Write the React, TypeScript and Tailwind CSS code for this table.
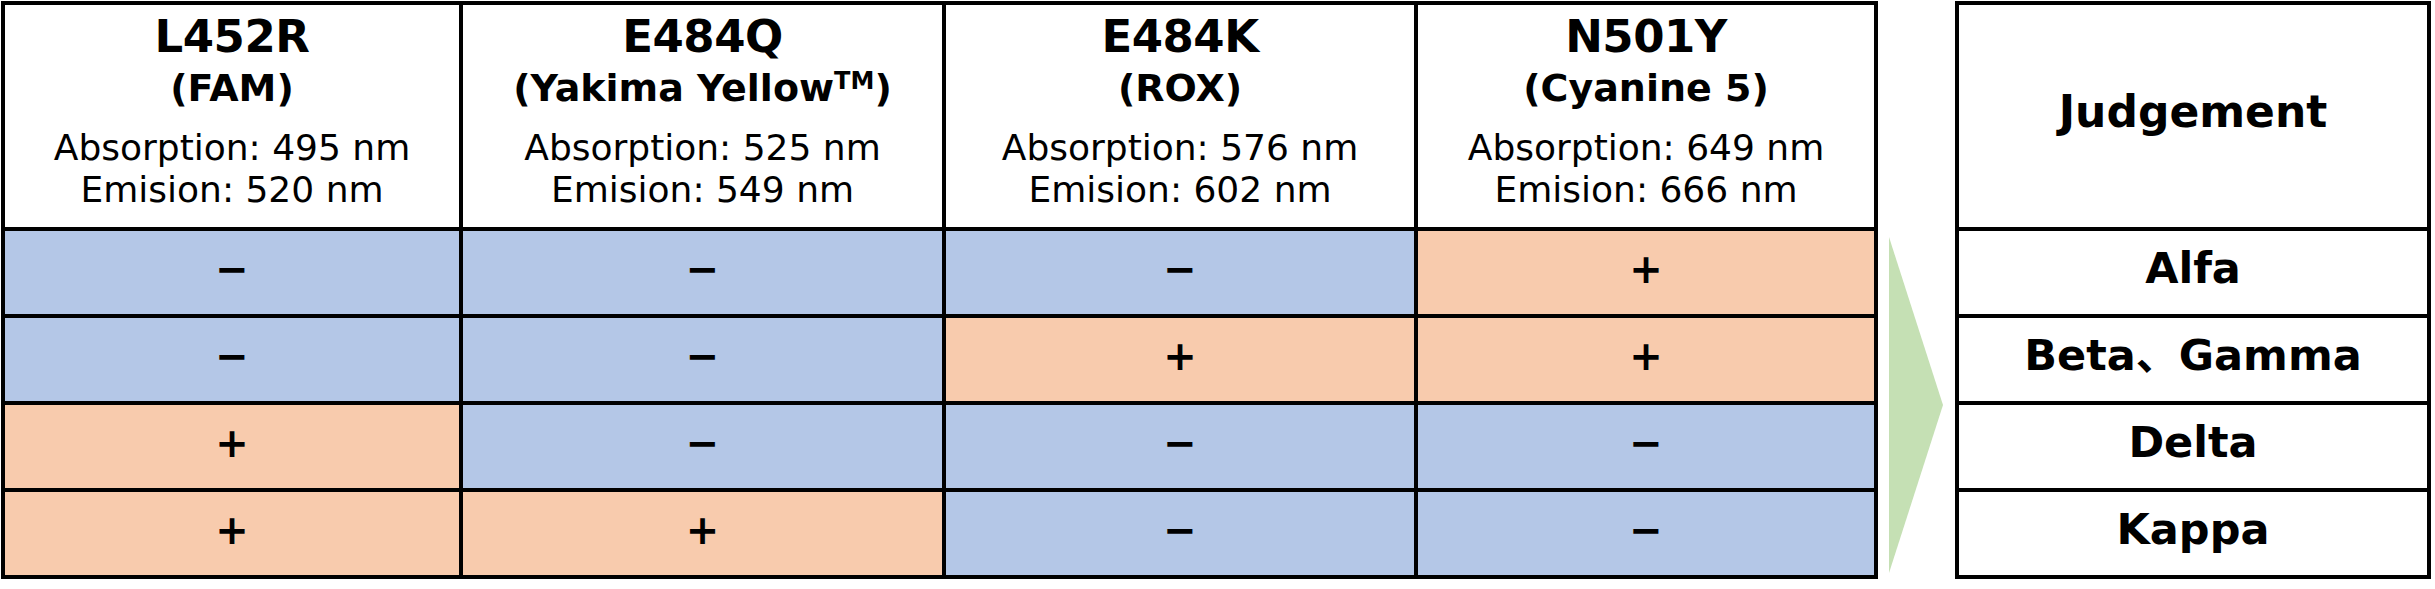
import React from "react";

const font = { fontFamily: '"DejaVu Sans", "Noto Sans CJK JP", sans-serif' };

const targets = [
  { name: "L452R", dye: "(FAM)", abs: 495, em: 520 },
  { name: "E484Q", dye: "(Yakima Yellow", tm: true, abs: 525, em: 549 },
  { name: "E484K", dye: "(ROX)", abs: 576, em: 602 },
  { name: "N501Y", dye: "(Cyanine 5)", abs: 649, em: 666 },
];

const results = [
  { calls: ["-", "-", "-", "+"], label: "Alfa" },
  { calls: ["-", "-", "+", "+"], label: "Beta、Gamma" },
  { calls: ["+", "-", "-", "-"], label: "Delta" },
  { calls: ["+", "+", "-", "-"], label: "Kappa" },
];

function SignCell({ sign }: { sign: string }) {
  const positive = sign === "+";
  return (
    <div
      className={
        positive
          ? "flex items-center justify-center bg-[#f8cbad] pb-[7px]"
          : "flex items-center justify-center bg-[#b4c7e7] pb-[7px]"
      }
    >
      <span className="text-[40px] font-bold leading-[46px] text-black">
        {positive ? "+" : "−"}
      </span>
    </div>
  );
}

export default function App() {
  return (
    <div className="flex items-start bg-white w-[2435px] h-[589px] pt-[1px] text-black" style={font}>
      {/* primer table */}
      <div className="ml-[1px] grid grid-cols-[454px_479px_468px_456px] grid-rows-[222px_83px_83px_83px_83px] gap-[4px] bg-black p-[4px]">
        {targets.map((t) => (
          <div key={t.name} className="flex flex-col items-center bg-white pt-[6px] text-center">
            <div className="text-[45px] font-bold leading-[52px] tracking-[-0.5px]">{t.name}</div>
            <div className="text-[38px] font-bold leading-[50px]">
              {t.dye}
              {t.tm && (
                <>
                  <span className="text-[24px] leading-none align-[12px]">TM</span>)
                </>
              )}
            </div>
            <div className="mt-[14px] text-[36px] leading-[42px]">
              <div>Absorption: {t.abs} nm</div>
              <div>Emision: {t.em} nm</div>
            </div>
          </div>
        ))}
        {results.map((r) =>
          r.calls.map((c, i) => <SignCell key={r.label + i} sign={c} />)
        )}
      </div>

      {/* arrow */}
      <svg className="ml-[11px] mt-[236px] shrink-0" width="54" height="336" viewBox="0 0 54 336">
        <polygon points="0,0 54,168 0,336" fill="#c5e0b4" />
      </svg>

      {/* judgement */}
      <div className="ml-[12px] grid w-[476px] grid-rows-[222px_83px_83px_83px_83px] gap-[4px] bg-black p-[4px]">
        <div className="flex items-center justify-center bg-white pb-[9px]">
          <span className="text-[44px] font-bold leading-[52px]">Judgement</span>
        </div>
        {results.map((r) => (
          <div key={r.label} className="flex items-center justify-center bg-white pb-[10px]">
            <span className="text-[43px] font-bold leading-[48px]">{r.label}</span>
          </div>
        ))}
      </div>
    </div>
  );
}
